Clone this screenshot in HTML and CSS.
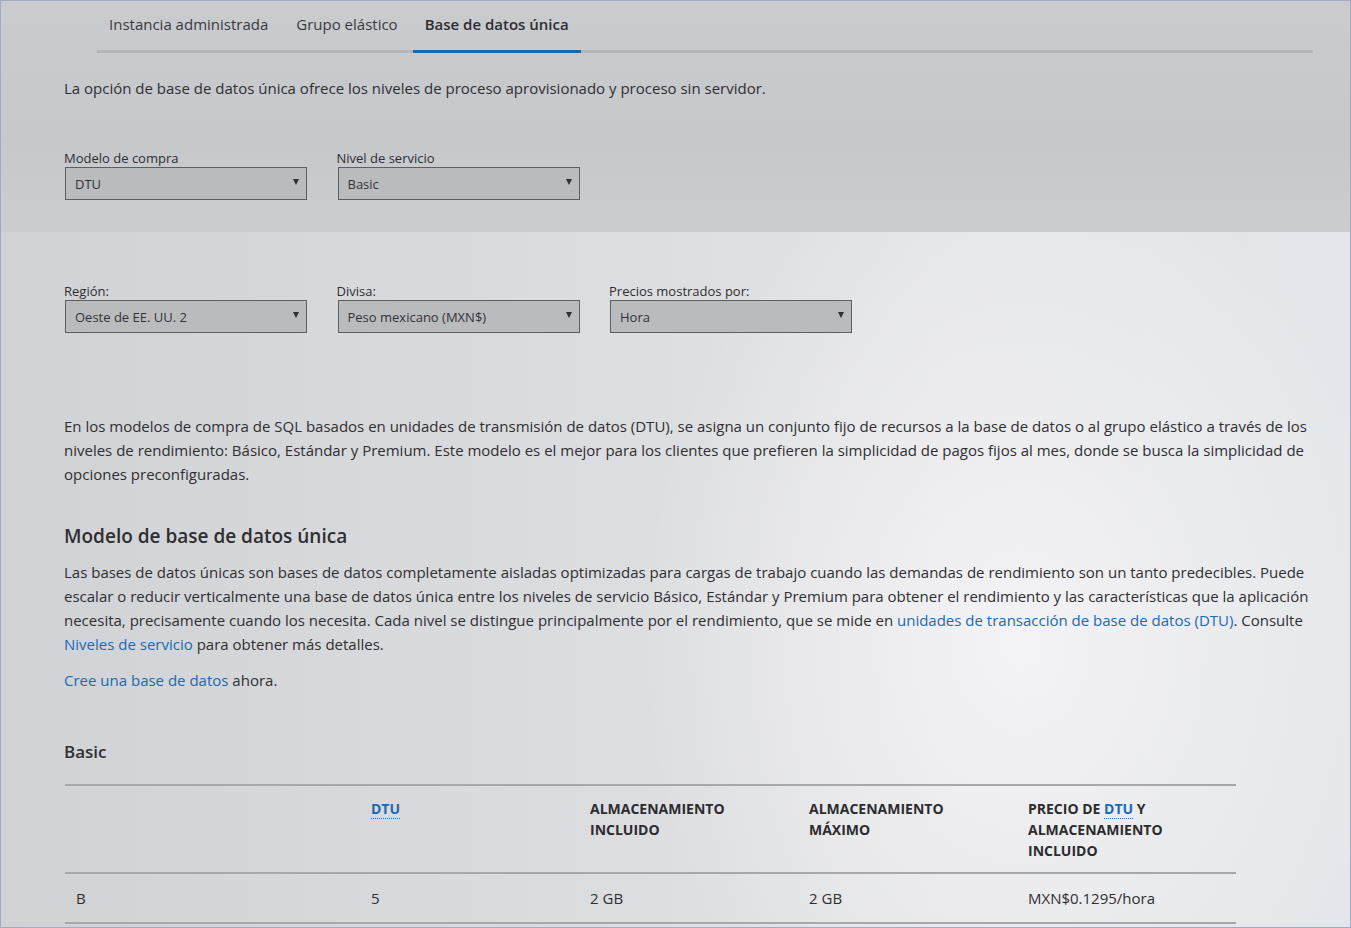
FILE: index.html
```html
<!DOCTYPE html>
<html lang="es">
<head>
<meta charset="utf-8">
<title>Precios - Base de datos única</title>
<link rel="stylesheet" href="styles.css">
</head>
<body>
<div class="frame">
  <div class="top">
    <nav class="tabs">
      <a class="tab">Instancia administrada</a>
      <a class="tab">Grupo elástico</a>
      <a class="tab active">Base de datos única</a>
    </nav>
    <p class="intro">La opción de base de datos única ofrece los niveles de proceso aprovisionado y proceso sin servidor.</p>
    <div class="fields fields-top">
      <div class="field">
        <label class="label">Modelo de compra</label>
        <div class="select"><span>DTU</span><span class="arrow"></span></div>
      </div>
      <div class="field">
        <label class="label">Nivel de servicio</label>
        <div class="select"><span>Basic</span><span class="arrow"></span></div>
      </div>
    </div>
  </div>
  <div class="bottom">
    <div class="fields fields-bottom">
      <div class="field">
        <label class="label">Región:</label>
        <div class="select"><span>Oeste de EE. UU. 2</span><span class="arrow"></span></div>
      </div>
      <div class="field">
        <label class="label">Divisa:</label>
        <div class="select"><span>Peso mexicano (MXN$)</span><span class="arrow"></span></div>
      </div>
      <div class="field">
        <label class="label">Precios mostrados por:</label>
        <div class="select"><span>Hora</span><span class="arrow"></span></div>
      </div>
    </div>
    <p class="text desc">En los modelos de compra de SQL basados en unidades de transmisión de datos (DTU), se asigna un conjunto fijo de recursos a la base de datos o al grupo elástico a través de los niveles de rendimiento: Básico, Estándar y Premium. Este modelo es el mejor para los clientes que prefieren la simplicidad de pagos fijos al mes, donde se busca la simplicidad de opciones preconfiguradas.</p>
    <h2 class="heading">Modelo de base de datos única</h2>
    <p class="text">Las bases de datos únicas son bases de datos completamente aisladas optimizadas para cargas de trabajo cuando las demandas de rendimiento son un tanto predecibles. Puede escalar o reducir verticalmente una base de datos única entre los niveles de servicio Básico, Estándar y Premium para obtener el rendimiento y las características que la aplicación necesita, precisamente cuando los necesita. Cada nivel se distingue principalmente por el rendimiento, que se mide en <a class="link">unidades de transacción de base de datos (DTU)</a>. Consulte <a class="link">Niveles de servicio</a> para obtener más detalles.</p>
    <p class="text create"><a class="link">Cree una base de datos</a> ahora.</p>
    <h3 class="subheading">Basic</h3>
    <table class="prices">
      <thead>
        <tr>
          <th class="c1"></th>
          <th><abbr class="abbr">DTU</abbr></th>
          <th>Almacenamiento incluido</th>
          <th>Almacenamiento máximo</th>
          <th>Precio de <abbr class="abbr">DTU</abbr> y almacenamiento incluido</th>
        </tr>
      </thead>
      <tbody>
        <tr>
          <td>B</td>
          <td>5</td>
          <td>2 GB</td>
          <td>2 GB</td>
          <td>MXN$0.1295/hora</td>
        </tr>
      </tbody>
    </table>
  </div>
</div>
</body>
</html>
```
FILE: styles.css
```css
html, body {
  margin: 0;
  padding: 0;
  height: 100%;
}
body {
  font-family: "Open Sans", "Noto Sans", sans-serif;
  color: #2f2f32;
  background: #d6d8db;
}
.frame {
  box-sizing: border-box;
  height: 928px;
  overflow: hidden;
  border: 1px solid #9eadc0;
  background:
    radial-gradient(ellipse 380px 500px at 1020px 640px, rgba(245,244,246,0.9), rgba(245,244,246,0) 100%),
    linear-gradient(90deg, #d1d2d5 0%, #dcdde0 45%, #e4e5e8 70%, #e3e6ea 100%);
}
.top {
  height: 231px;
  box-sizing: border-box;
  padding: 0 0 0 63px;
  background: linear-gradient(180deg, #c9cbcf 0%, #c6c8cc 60%, #cbccd0 100%);
}
.tabs {
  display: flex;
  margin: 0 37px 0 33px;
  border-bottom: 3px solid #b4b6ba;
}
.tab {
  display: block;
  padding: 13px 12px 16px;
  margin-bottom: -3px;
  border-bottom: 3px solid transparent;
  font-size: 15px;
  line-height: 20px;
  color: #3a3a3d;
  margin-right: 4px;
}
.tab.active {
  font-weight: 600;
  color: #2e2e31;
  border-bottom-color: #1467b3;
  margin-left: -1px;
}
.intro {
  margin: 23px 0 0;
  font-size: 15px;
  line-height: 24px;
}
.fields {
  display: flex;
  gap: 30.5px;
  margin-left: 1px;
}
.fields-top {
  margin-top: 49px;
}
.field {
  width: 242px;
}
.label {
  display: block;
  font-size: 13px;
  line-height: 18px;
  margin-left: -1px;
  color: #2e2e31;
}
.select {
  box-sizing: border-box;
  height: 33px;
  border: 1px solid #5d5e62;
  background: #babbbf;
  display: flex;
  align-items: center;
  justify-content: space-between;
  padding: 0 7px 0 9px;
  font-size: 13px;
  color: #333336;
}
.arrow {
  width: 0;
  height: 0;
  border-left: 3px solid transparent;
  border-right: 3px solid transparent;
  border-top: 6px solid #303033;
  margin-top: -3px;
}
.bottom {
  padding: 50px 25px 0 63px;
}
.text {
  margin: 0;
  font-size: 15px;
  line-height: 24px;
}
.desc {
  margin-top: 81px;
}
.heading {
  margin: 37px 0 11px;
  font-size: 19px;
  line-height: 26px;
  font-weight: 600;
  color: #2e2e31;
}
.link {
  color: #1a6ab4;
}
.create {
  margin-top: 12px;
}
.subheading {
  margin: 48px 0 20px;
  font-size: 17px;
  line-height: 24px;
  font-weight: 600;
}
.prices {
  width: 1171px;
  margin-left: 1px;
  border-collapse: collapse;
  border-top: 2px solid #a6a8ab;
  table-layout: fixed;
}
.prices th,
.prices td {
  text-align: left;
  vertical-align: top;
  border-bottom: 2px solid #a6a8ab;
}
.prices th {
  width: 219px;
  font-size: 14px;
  line-height: 21px;
  font-weight: 700;
  text-transform: uppercase;
  color: #2c2c2f;
  padding: 12px 45px 11px 11px;
  box-sizing: border-box;
}
.prices th.c1 {
  width: 295px;
}
.prices td {
  font-size: 15px;
  line-height: 24px;
  padding: 12px 11px 12px;
}
.abbr {
  color: #1a6ab4;
  text-decoration: none;
  border-bottom: 1px dotted #1a6ab4;
}
```
